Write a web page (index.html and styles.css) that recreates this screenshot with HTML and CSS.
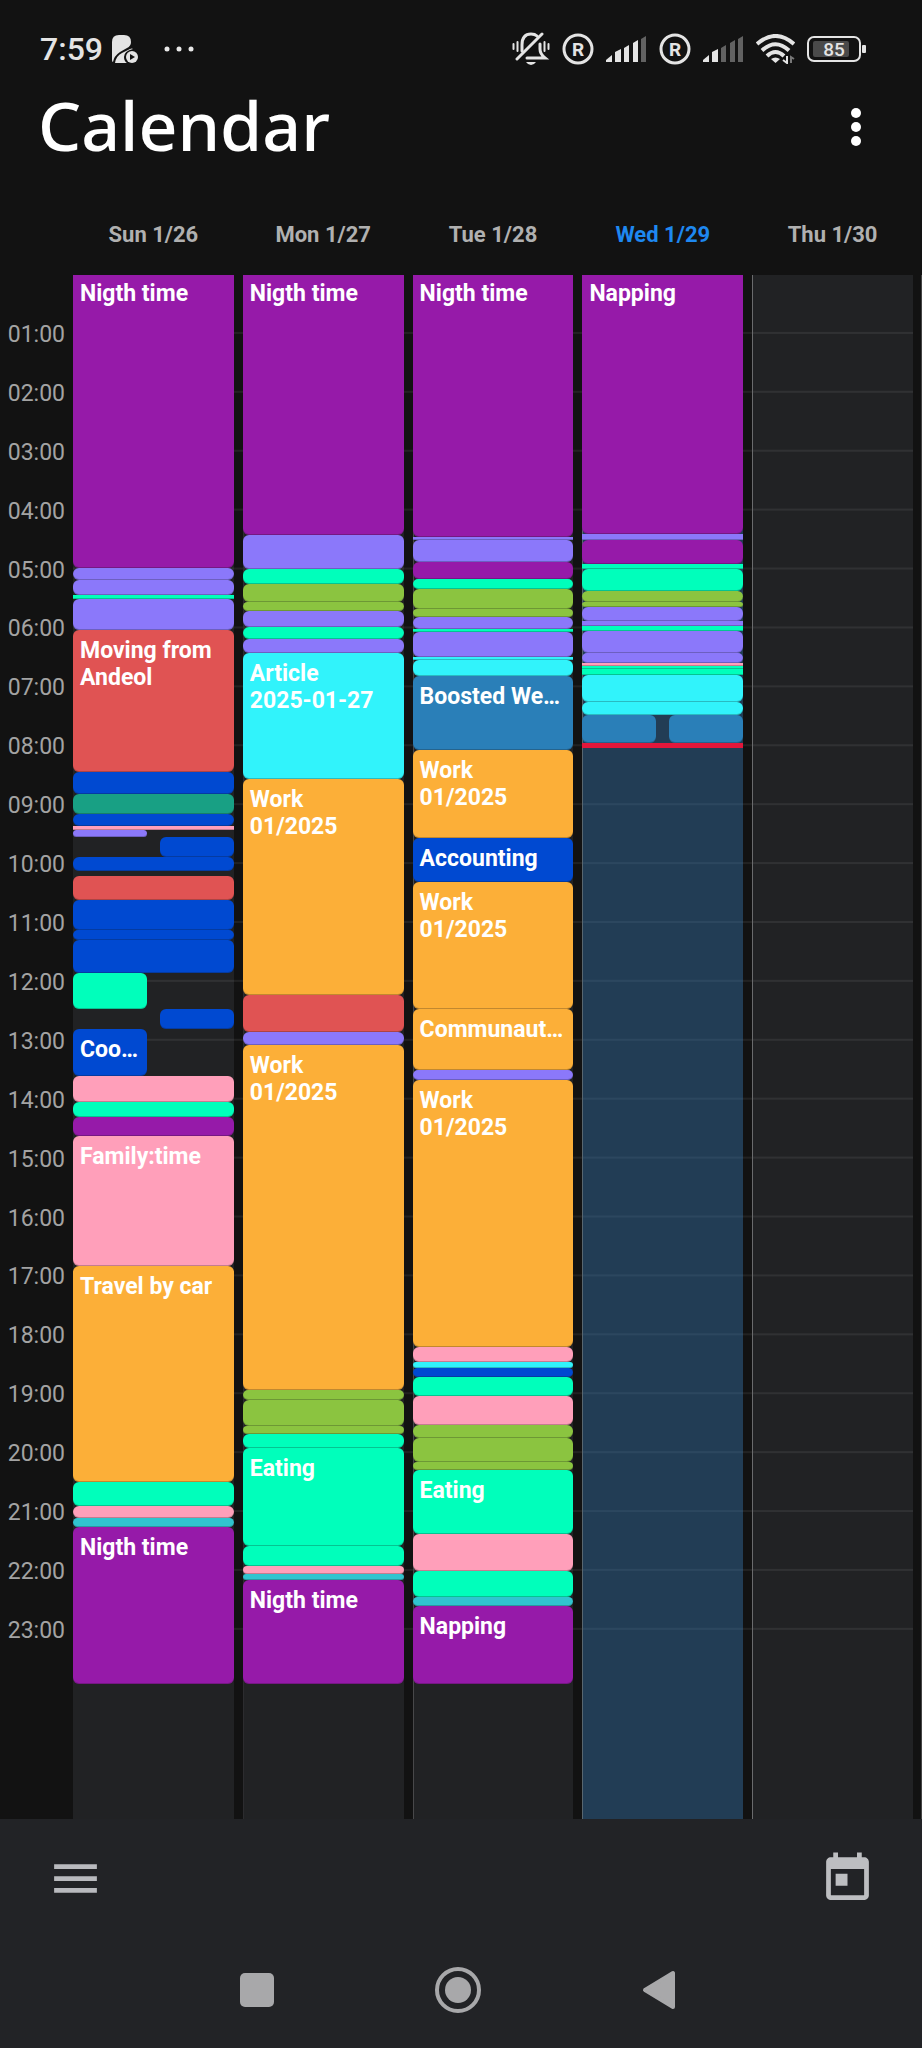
FILE: index.html
```html
<!DOCTYPE html>
<html lang="en">
<head>
<meta charset="utf-8">
<meta name="viewport" content="width=device-width, initial-scale=1">
<title>Calendar</title>
<link rel="stylesheet" href="styles.css">
</head>
<body>
<div class="status">
  <span class="clock">7:59</span>
  <svg class="app-icon" width="28" height="30" viewBox="0 0 28 30">
    <path fill="#e4e4e4" d="M1 26V8Q1 1 8 1h5q7 0 7 7 0 4-4 6L9 18Q3 22 2 28q-1 0-1-2z"/>
    <path fill="#e4e4e4" d="M4 29q1-7 7-10l8-4q2-1 3 0-9 2-9 8 0 4 3 6z"/>
    <circle cx="21" cy="23" r="6" fill="#e4e4e4"/>
    <path fill="#121212" d="M19 20v6l5-3z"/>
  </svg>
  <svg class="more-notifications" width="30" height="6" viewBox="0 0 30 6" fill="#e8e8e8"><circle cx="3" cy="3" r="2.500"/><circle cx="15" cy="3" r="2.500"/><circle cx="27" cy="3" r="2.500"/></svg>
  <div class="status-icons">
    <svg width="38" height="34" viewBox="0 0 38 34" fill="none" stroke="#e4e4e4" stroke-width="3" stroke-linecap="round">
      <path d="M10 19V13Q10 2 19 2q4 0 6 2M28 12v5q0 5 5 9H15"/>
      <path d="M5 27 30 2"/>
      <path d="M14 30h10q-2 3-5 3t-5-3z" fill="#e4e4e4" stroke="none"/>
      <path d="M1.500 12v5M5.500 10v9M32.500 10v9M36.500 12v5" stroke-width="2"/>
    </svg>
    <svg width="32" height="32" viewBox="0 0 32 32"><circle cx="16" cy="16" r="14" fill="none" stroke="#e4e4e4" stroke-width="3"/><text class="reg" x="16" y="23" text-anchor="middle">R</text></svg>
    <svg width="41" height="26" viewBox="0 0 41 26" fill="#e4e4e4"><path d="M0 26v-2l6-5v7z"/><path d="M9 26V16l6-3v13z"/><path d="M18 26V12l5-3v17z"/><path d="M27 26V7l5-3v22z"/><path fill="#626262" d="M35 26V3l5-3v26z"/></svg>
    <svg width="32" height="32" viewBox="0 0 32 32"><circle cx="16" cy="16" r="14" fill="none" stroke="#e4e4e4" stroke-width="3"/><text class="reg" x="16" y="23" text-anchor="middle">R</text></svg>
    <svg width="41" height="26" viewBox="0 0 41 26" fill="#e4e4e4"><path d="M0 26v-2l6-5v7z"/><path d="M9 26V16l6-3v13z"/><path fill="#626262" d="M18 26V12l5-3v17zM27 26V7l5-3v22zM35 26V3l5-3v26z"/></svg>
    <svg width="39" height="30" viewBox="0 0 39 30" fill="none" stroke="#e4e4e4" stroke-width="4">
      <path d="M1 10Q19.500-6 38 10M6 16.500Q19.500 4 33 16.500M11 22Q19.500 14 28 22"/>
      <path d="M15 25q4.500-3 9 0l-4.500 4z" fill="#e4e4e4" stroke="none"/>
      <path d="M31 22v7l-4-3" stroke-width="2"/><path d="M35 29v-6l3 2" stroke="#777" stroke-width="2"/>
    </svg>
    <svg width="59" height="26" viewBox="0 0 59 26"><rect x="1" y="1" width="52" height="24" rx="6" fill="none" stroke="#e4e4e4" stroke-width="2"/><rect x="6" y="5" width="36" height="16" rx="2" fill="#4a4a4a"/><rect x="55" y="9" width="4" height="8" rx="1" fill="#e4e4e4"/><text class="charge" x="27" y="20" text-anchor="middle">85</text></svg>
  </div>
</div>

<header class="title-bar">
  <h1>Calendar</h1>
  <button class="icon-button" type="button" aria-label="More options"><svg width="10" height="38" viewBox="0 0 10 38" fill="#fff"><circle cx="5" cy="5" r="5"/><circle cx="5" cy="19" r="5"/><circle cx="5" cy="33" r="5"/></svg></button>
</header>

<div class="day-names">
  <h2>Sun 1/26</h2>
  <h2>Mon 1/27</h2>
  <h2>Tue 1/28</h2>
  <h2 class="current">Wed 1/29</h2>
  <h2>Thu 1/30</h2>
</div>

<main class="schedule">
  <div class="hours">
    <span>01:00</span><span>02:00</span><span>03:00</span><span>04:00</span><span>05:00</span><span>06:00</span><span>07:00</span><span>08:00</span><span>09:00</span><span>10:00</span><span>11:00</span><span>12:00</span><span>13:00</span><span>14:00</span><span>15:00</span><span>16:00</span><span>17:00</span><span>18:00</span><span>19:00</span><span>20:00</span><span>21:00</span><span>22:00</span><span>23:00</span>
  </div>
  <div class="week">
    <section class="day" aria-label="Sun 1/26">
      <div class="event purple continued" style="height:293px">Nigth time</div>
      <div class="event violet" style="height:12px"></div>
      <div class="event violet" style="height:15px"></div>
      <div class="event mint thin" style="height:4px"></div>
      <div class="event violet" style="height:31px"></div>
      <div class="event red" style="height:142px">Moving from<br>Andeol</div>
      <div class="event blue" style="height:22px"></div>
      <div class="event teal" style="height:20px"></div>
      <div class="event blue" style="height:12px"></div>
      <div class="event pink thin" style="height:4px"></div>
      <div class="event violet left" style="height:7px"></div>
      <div class="event blue right" style="height:20px"></div>
      <div class="event blue" style="height:14px"></div>
      <div class="free" style="height:5px"></div>
      <div class="event red" style="height:24px"></div>
      <div class="event blue" style="height:30px"></div>
      <div class="event blue" style="height:10px"></div>
      <div class="event blue" style="height:33px"></div>
      <div class="event mint left" style="height:36px"></div>
      <div class="event blue right" style="height:20px"></div>
      <div class="event blue left" style="height:47px">Coo…</div>
      <div class="event pink" style="height:26px"></div>
      <div class="event mint" style="height:15px"></div>
      <div class="event purple" style="height:19px"></div>
      <div class="event pink" style="height:130px">Family:time</div>
      <div class="event orange" style="height:216px">Travel by car</div>
      <div class="event mint" style="height:24px"></div>
      <div class="event pink" style="height:12px"></div>
      <div class="event aqua" style="height:9px"></div>
      <div class="event purple" style="height:157px">Nigth time</div>
    </section>
    <section class="day edge-faint" aria-label="Mon 1/27">
      <div class="event purple continued" style="height:260px">Nigth time</div>
      <div class="event violet" style="height:34px"></div>
      <div class="event mint" style="height:15px"></div>
      <div class="event green" style="height:18px"></div>
      <div class="event green" style="height:9px"></div>
      <div class="event violet" style="height:16px"></div>
      <div class="event mint" style="height:12px"></div>
      <div class="event violet" style="height:14px"></div>
      <div class="event cyan" style="height:126px">Article<br>2025-01-27</div>
      <div class="event orange" style="height:216px">Work<br>01/2025</div>
      <div class="event red" style="height:37px"></div>
      <div class="event violet" style="height:13px"></div>
      <div class="event orange" style="height:345px">Work<br>01/2025</div>
      <div class="event green" style="height:10px"></div>
      <div class="event green" style="height:26px"></div>
      <div class="event green" style="height:8px"></div>
      <div class="event mint" style="height:14px"></div>
      <div class="event mint" style="height:98px">Eating</div>
      <div class="event mint" style="height:20px"></div>
      <div class="event pink" style="height:8px"></div>
      <div class="event aqua" style="height:6px"></div>
      <div class="event purple" style="height:104px">Nigth time</div>
    </section>
    <section class="day edge-soft" aria-label="Tue 1/28">
      <div class="event purple continued" style="height:262px">Nigth time</div>
      <div class="event violet thin" style="height:3px"></div>
      <div class="event violet" style="height:22px"></div>
      <div class="event purple" style="height:17px"></div>
      <div class="event mint" style="height:10px"></div>
      <div class="event green" style="height:20px"></div>
      <div class="event green" style="height:8px"></div>
      <div class="event violet" style="height:12px"></div>
      <div class="event mint thin" style="height:3px"></div>
      <div class="event violet" style="height:25px"></div>
      <div class="event cyan thin" style="height:3px"></div>
      <div class="event cyan" style="height:16px"></div>
      <div class="event steel" style="height:74px">Boosted We…</div>
      <div class="event orange" style="height:88px">Work<br>01/2025</div>
      <div class="event blue" style="height:44px">Accounting</div>
      <div class="event orange" style="height:127px">Work<br>01/2025</div>
      <div class="event orange" style="height:61px">Communaut…</div>
      <div class="event violet" style="height:10px"></div>
      <div class="event orange" style="height:267px">Work<br>01/2025</div>
      <div class="event pink" style="height:15px"></div>
      <div class="event cyan" style="height:6px"></div>
      <div class="event blue" style="height:9px"></div>
      <div class="event mint" style="height:19px"></div>
      <div class="event pink" style="height:29px"></div>
      <div class="event green" style="height:13px"></div>
      <div class="event green" style="height:24px"></div>
      <div class="event green" style="height:8px"></div>
      <div class="event mint" style="height:64px">Eating</div>
      <div class="event pink" style="height:37px"></div>
      <div class="event mint" style="height:26px"></div>
      <div class="event aqua" style="height:9px"></div>
      <div class="event purple" style="height:78px">Napping</div>
    </section>
    <section class="day today" aria-label="Wed 1/29">
      <div class="event purple continued" style="height:259px">Napping</div>
      <div class="event violet thin" style="height:6px"></div>
      <div class="event purple" style="height:24px"></div>
      <div class="event mint thin" style="height:5px"></div>
      <div class="event mint" style="height:22px"></div>
      <div class="event green" style="height:11px"></div>
      <div class="event green" style="height:5px"></div>
      <div class="event violet" style="height:14px"></div>
      <div class="event violet thin" style="height:5px"></div>
      <div class="event mint thin" style="height:5px"></div>
      <div class="event violet" style="height:22px"></div>
      <div class="event violet" style="height:10px"></div>
      <div class="event pink thin" style="height:3px"></div>
      <div class="event mint thin" style="height:3px"></div>
      <div class="event mint thin" style="height:6px"></div>
      <div class="event cyan" style="height:27px"></div>
      <div class="event cyan" style="height:13px"></div>
      <div class="pair" style="height:28px">
        <div class="event steel left"></div>
        <div class="event steel right"></div>
      </div>
      <div class="now"></div>
    </section>
    <section class="day edge-strong" aria-label="Thu 1/30"></section>
  </div>
</main>

<nav class="toolbar">
  <button class="icon-button" type="button" aria-label="Menu"><svg width="57" height="57" viewBox="0 0 24 24" fill="#b9babe"><path d="M3 18h18v-2H3v2zm0-5h18v-2H3v2zm0-7v2h18V6H3z"/></svg></button>
  <button class="icon-button" type="button" aria-label="Today"><svg width="57" height="57" viewBox="0 0 24 24" fill="#bdbec1"><path d="M19 3h-1V1h-2v2H8V1H6v2H5c-1.110 0-1.990.9-1.990 2L3 19c0 1.100.89 2 2 2h14c1.100 0 2-.9 2-2V5c0-1.100-.9-2-2-2zm0 16H5V8h14v11zM7 10h5v5H7z"/></svg></button>
</nav>
<nav class="system-nav">
  <button class="icon-button" type="button" aria-label="Recent apps"><svg width="48" height="48" viewBox="0 0 48 48"><rect x="7" y="7" width="34" height="34" rx="5" fill="#a8a8aa"/></svg></button>
  <button class="icon-button" type="button" aria-label="Home"><svg width="48" height="48" viewBox="0 0 48 48"><circle cx="24" cy="24" r="21" fill="none" stroke="#a8a8aa" stroke-width="4"/><circle cx="24" cy="24" r="13" fill="#a8a8aa"/></svg></button>
  <button class="icon-button" type="button" aria-label="Back"><svg width="48" height="48" viewBox="0 0 48 48"><path d="M10 24 38 7v34z" fill="#a8a8aa" stroke="#a8a8aa" stroke-width="4" stroke-linejoin="round"/></svg></button>
</nav>
</body>
</html>
```
FILE: styles.css
```css
* { box-sizing: border-box; }

body {
  margin: 0;
  min-height: 100vh;
  display: flex;
  flex-direction: column;
  background: #121212;
  color: #fff;
  font-family: Roboto, sans-serif;
  font-size: 23px;
  line-height: 27px;
}

svg { display: block; flex: none; }
h1, h2 { margin: 0; }

.icon-button {
  padding: 0;
  border: 0;
  background: none;
  cursor: pointer;
}

/* Status bar */
.status {
  height: 84px;
  padding: 14px 56px 0 40px;
  display: flex;
  align-items: center;
}
.clock { font-size: 32px; font-weight: 500; color: #e4e4e4; }
.app-icon { margin-left: 8px; }
.more-notifications { margin-left: 25px; }
.status-icons { margin-left: auto; display: flex; align-items: center; gap: 12px; }
.reg { font-size: 19px; font-weight: 700; fill: #e4e4e4; }
.charge { font-size: 19px; font-weight: 500; fill: #e4e4e4; }

/* Title */
.title-bar {
  height: 86px;
  padding: 0 61px 0 38px;
  display: flex;
  align-items: center;
  justify-content: space-between;
}
.title-bar h1 {
  padding-bottom: 4px;
  font-family: "Noto Sans", sans-serif;
  font-size: 68px;
  font-weight: 500;
  line-height: 82px;
}

/* Week */
.day-names, .week {
  display: grid;
  grid-template-columns: repeat(5, minmax(0, 1fr));
  column-gap: 9px;
}
.day-names {
  height: 105px;
  padding: 23px 9px 0 73px;
  align-items: center;
  text-align: center;
}
.day-names h2 { font-size: 22px; font-weight: 700; color: #b0b0b0; }
.day-names .current { color: #1e88f0; }

.schedule {
  flex: 1;
  display: grid;
  grid-template-columns: 73px minmax(0, 1fr);
}
.hours {
  height: 1355px;
  margin-top: 30px;
  padding-right: 8px;
  display: flex;
  flex-direction: column;
  color: #a3a3a3;
}
.hours span { flex: 1; display: flex; align-items: center; justify-content: flex-end; }

.week { padding-right: 8px; border-right: 1px solid #444; }
.week::before {
  content: "";
  grid-area: 1 / 1 / 2 / -1;
  height: 1355px;
  background: linear-gradient(to top, #222 2px, transparent 2px) 0 0 / 100% calc(100% / 23);
}
.day {
  grid-row: 1;
  display: flex;
  flex-direction: column;
  background: rgba(222, 232, 255, 0.08);
}
.day:nth-of-type(1) { grid-column: 1; }
.day:nth-of-type(2) { grid-column: 2; }
.day:nth-of-type(3) { grid-column: 3; }
.day:nth-of-type(4) { grid-column: 4; }
.day:nth-of-type(5) { grid-column: 5; }
.edge-faint { box-shadow: inset 1px 0 #2c2c2f; }
.edge-soft { box-shadow: inset 1px 0 #48484a; }
.edge-strong { box-shadow: inset 1px 0 #6a6b6d; }
.today { background: rgba(60, 128, 188, 0.4); box-shadow: inset 1px 0 #58666f; }

/* Events */
.event {
  flex: none;
  padding: 0 7px;
  border-radius: 6px;
  overflow: hidden;
  font-weight: 700;
  box-shadow: inset 0 -1px rgba(18, 18, 18, 0.25);
}
.event:not(:empty) { padding-top: 7px; }
.continued { border-radius: 0 0 6px 6px; }
.continued:not(:empty) { padding-top: 5px; }
.thin { border-radius: 0; }
.left { align-self: flex-start; width: 46%; }
.right { align-self: flex-end; width: 46%; }
.free { flex: none; }
.pair { flex: none; display: flex; justify-content: space-between; }
.pair .event { align-self: stretch; }
.now { height: 5px; background: #e3173b; }

.purple { background: #961aa9; }
.violet { background: #8b78fa; }
.mint { background: #00ffbb; }
.green { background: #8bc440; }
.cyan { background: #31f3fb; }
.red { background: #e05353; }
.blue { background: #0049d1; }
.teal { background: #18a084; }
.orange { background: #fcaf38; }
.pink { background: #ff9fba; }
.aqua { background: #30c4cf; }
.steel { background: #2a7fb8; }

/* Bottom bars */
.toolbar {
  height: 118px;
  padding: 0 46px 0 47px;
  display: flex;
  align-items: center;
  justify-content: space-between;
  background: #222326;
}
.system-nav {
  height: 111px;
  padding: 0 6px 5px 0;
  display: flex;
  align-items: center;
  justify-content: center;
  gap: 153px;
  background: #222326;
}
```
